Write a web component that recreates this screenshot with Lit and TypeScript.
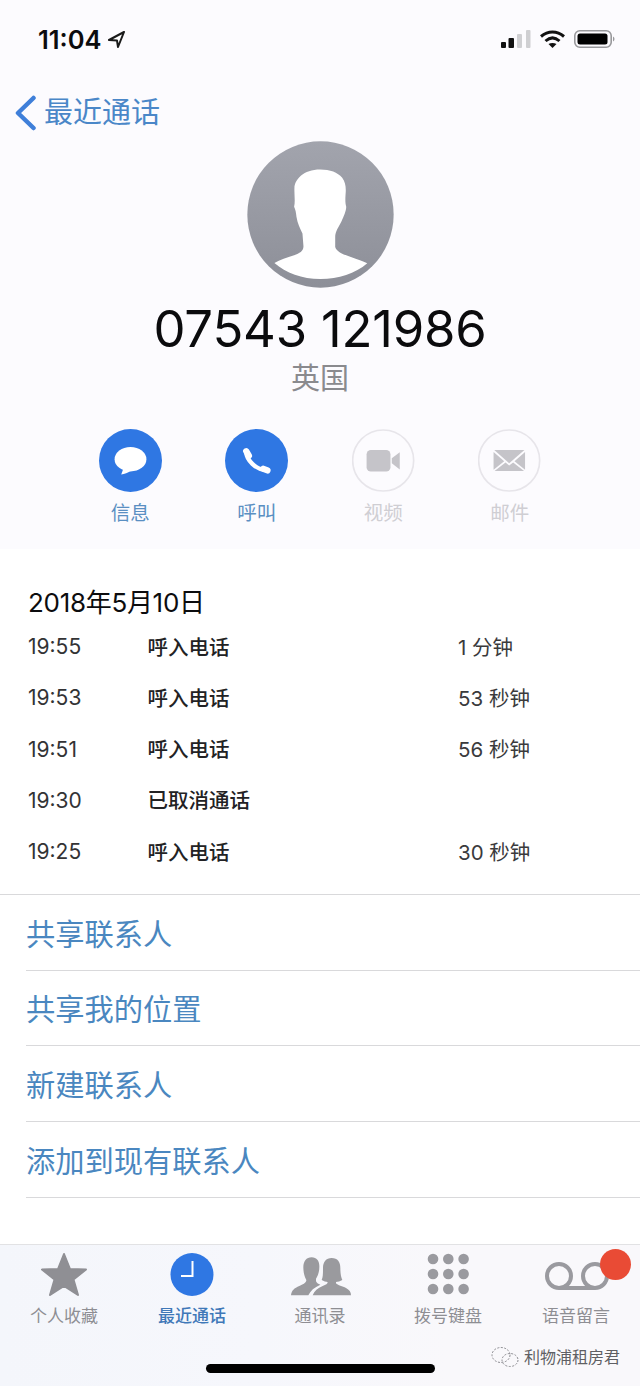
import { LitElement, html, css, svg } from "lit";
import { customElement } from "lit/decorators.js";

const CALLS = [
  ["19:55", "呼入电话", "1 分钟"],
  ["19:53", "呼入电话", "53 秒钟"],
  ["19:51", "呼入电话", "56 秒钟"],
  ["19:30", "已取消通话", ""],
  ["19:25", "呼入电话", "30 秒钟"],
];
const LINKS = ["共享联系人", "共享我的位置", "新建联系人", "添加到现有联系人"];

@customElement("app-root")
export class AppRoot extends LitElement {
  static styles = css`
    :host {
      display: block;
      position: relative;
      width: 640px;
      height: 1386px;
      overflow: hidden;
      background: #fff;
      font-family: Inter, "Noto Sans CJK SC", sans-serif;
      color: #0c0c0e;
    }
    svg { display: block; }
    .top { height: 549px; background: #fcfbfe; display: flex; flex-direction: column; align-items: center; }
    .status { align-self: stretch; height: 78px; display: flex; align-items: center; justify-content: space-between; padding: 0 25px 0 38px; }
    .time { display: flex; align-items: center; gap: 5px; font-size: 25.5px; font-weight: 600; }
    .sys { display: flex; align-items: center; gap: 8px; }
    .nav { align-self: stretch; height: 63px; padding: 6px 0 0 14px; box-sizing: border-box; display: flex; align-items: center; gap: 7px; color: #4a87c8; font-size: 29px; line-height: 1; }
    .avatar { width: 147px; height: 147px; }
    .number { font-size: 50.8px; line-height: 60px; margin-top: 11px; font-weight: 400; letter-spacing: -0.2px; color: #0b0b0d; }
    .country { font-size: 29px; line-height: 36px; color: #8a8a8e; margin-top: 2px; }
    .actions { display: grid; grid-template-columns: repeat(4, 126.5px); margin-top: 32px; }
    .action { display: flex; flex-direction: column; align-items: center; gap: 7px; font-size: 19.5px; line-height: 28px; color: #5a8fc2; }
    .action.off { color: #cfced3; }
    .log { padding: 36px 0 0 28px; height: 346px; box-sizing: border-box; border-bottom: 1.5px solid #d9d9db; }
    .date { font-size: 26px; line-height: 36px; letter-spacing: -0.3px; }
    .row { display: grid; grid-template-columns: 119.5px 310.5px 1fr; height: 51.25px; align-items: center; font-size: 20.5px; color: #1b1b1d; }
    .row .t { font-size: 21px; color: #333335; }
    .row .k { font-weight: 500; color: #222224; padding-bottom: 2px; }
    .row .d { color: #3a3a3c; padding-bottom: 2px; }
    .links { padding-left: 26px; }
    .link { height: 75.7px; box-sizing: border-box; display: flex; align-items: center; padding-bottom: 1.5px; border-bottom: 1.5px solid #d9d9db; color: #4a87c0; font-size: 29.25px; }
    .tabs { position: absolute; left: 0; right: 0; top: 1243.5px; bottom: 0; border-top: 1.5px solid #e2e2e4; background: linear-gradient(90deg, #f4f6fb, #f6f7fc 40%, #f9f8fb 70%, #f9f8fb); display: grid; grid-template-columns: repeat(5, 128px); align-content: start; }
    .tab { display: flex; flex-direction: column; align-items: center; font-size: 17px; line-height: 24px; color: #8e8e93; }
    .tab.on { color: #3f78b8; font-weight: 500; }
    .tab svg { margin: 7px 0 7px; }
    .badge { position: absolute; left: 599.5px; top: 1248.5px; width: 31px; height: 31px; border-radius: 50%; background: #e94b35; }
    .home { position: absolute; left: 206px; top: 1363.5px; width: 229px; height: 9px; border-radius: 5px; background: #000; }
    .mark { position: absolute; left: 490px; top: 1342px; display: flex; align-items: center; gap: 4px; font-size: 16px; line-height: 30px; color: #5f5f64; text-shadow: 0 0 2px #fff; white-space: nowrap; }
  `;

  private avatar() {
    return html`<svg class="avatar" viewBox="82 35 438 440">
      <defs>
        <linearGradient id="g" x1="0" y1="0" x2="0" y2="1">
          <stop offset="0" stop-color="#a2a4ad"></stop>
          <stop offset="1" stop-color="#8d8f98"></stop>
        </linearGradient>
      </defs>
      <circle cx="301" cy="255" r="219" fill="url(#g)"></circle>
      <path fill="#fff" d="M300 120C330 120 352 128 366 145C376 158 378 175 376 195C375 210 375 222 378 232C378 245 370 262 364 275C356 292 345 305 345 322L345 352C350 368 370 374 392 382C412 389 428 394 441 401C405 432 355 448 301 448C245 448 198 430 163 400C180 390 200 384 222 377C238 371 250 365 250 350L247 312C240 298 232 282 229 262C228 250 226 240 222 232C226 215 222 195 223 175C224 150 250 120 300 120Z"></path>
    </svg>`;
  }

  private msg() {
    return html`<svg width="63" height="63" viewBox="55 27 190 190">
      <circle cx="150" cy="122" r="95" fill="#2f77e3"></circle>
      <ellipse cx="150" cy="118" rx="48" ry="37" fill="#fff"></ellipse>
      <path fill="#fff" d="M128 148L122 164C132 163 142 159 150 154Z"></path>
    </svg>`;
  }
  private phone() {
    return html`<svg width="63" height="63" viewBox="433 27 190 190">
      <circle cx="528" cy="122" r="95" fill="#2f77e3"></circle>
      <g fill="none" stroke="#fff" stroke-linecap="round">
        <path stroke-width="13" d="M497 98C499 122 526 148 552 150"></path>
        <path stroke-width="19" d="M497 94L505 107"></path>
        <path stroke-width="19" d="M549 147L561 152"></path>
      </g>
    </svg>`;
  }
  private video() {
    return html`<svg width="63" height="63" viewBox="64 27 190 190">
      <circle cx="158" cy="122" r="92" fill="none" stroke="#e7e5ea" stroke-width="5"></circle>
      <rect x="108" y="90" width="72" height="65" rx="13" fill="#c5c4c9"></rect>
      <path fill="#c5c4c9" d="M184 115L208 97V149L184 130Z"></path>
    </svg>`;
  }
  private mail() {
    return html`<svg width="63" height="63" viewBox="443 27 190 190">
      <circle cx="537" cy="122" r="92" fill="none" stroke="#e7e5ea" stroke-width="5"></circle>
      <path fill="#c5c4c9" d="M492 90H583L537 130Z"></path>
      <path fill="#c5c4c9" d="M490 96L522 124L490 150Z"></path>
      <path fill="#c5c4c9" d="M585 96L553 124L585 150Z"></path>
      <path fill="#c5c4c9" d="M493 154L526 128L537 137L549 128L582 154Z"></path>
    </svg>`;
  }

  private star() {
    return html`<svg width="48" height="45" viewBox="0 0 48 45">
      <path fill="#8f8f94" stroke="#8f8f94" stroke-width="2" stroke-linejoin="round" d="M24 2L30 17L46 17.500L33.500 27.500L38 43L24 34L10 43L14.500 27.500L2 17.500L18 17Z"></path>
    </svg>`;
  }
  private clock() {
    return html`<svg width="44" height="45" viewBox="0 0 44 45">
      <circle cx="22" cy="22.500" r="21.500" fill="#2f77e3"></circle>
      <path fill="none" stroke="#fff" stroke-width="2" d="M22.500 9V24H11"></path>
    </svg>`;
  }
  private people() {
    return html`<svg width="66" height="45" viewBox="18 12 198 135">
      <path fill="#9a9a9e" d="M92 28C108 28 116 40 115 58C115 72 110 85 105 92L105 100C108 106 112 108 118 110C100 118 88 128 82 142L30 142C31 128 40 120 55 114C68 108 76 104 76 96C70 85 67 72 67 58C67 40 76 28 92 28Z"></path>
      <path fill="#9a9a9e" d="M152 30C170 30 178 42 178 60C178 75 180 88 184 96C178 100 170 102 165 102L165 106C170 112 185 115 195 120C205 125 210 132 210 142L95 142C100 128 110 120 125 114C135 110 140 108 140 102C135 102 128 100 122 96C126 88 126 75 126 60C126 42 135 30 152 30Z"></path>
    </svg>`;
  }
  private keypad() {
    const xs = [9, 24.3, 39.6];
    const ys = [7, 22, 37];
    return html`<svg width="48" height="45" viewBox="0 0 48 45">
      ${ys.map((y) => xs.map((x) => svg`<circle cx=${x} cy=${y} r="5.300" fill="#9a9a9f"></circle>`))}
    </svg>`;
  }
  private voicemail() {
    return html`<svg width="66" height="45" viewBox="0 0 66 45">
      <g fill="none" stroke="#9a9a9f" stroke-width="4">
        <circle cx="16" cy="24" r="12"></circle>
        <circle cx="52" cy="24" r="12"></circle>
        <path d="M16 36H52"></path>
      </g>
    </svg>`;
  }

  render() {
    return html`
      <section class="top">
        <div class="status">
          <div class="time">11:04
            <svg width="19" height="18" viewBox="0 0 19 18"><path fill="#fff" stroke="#1a1a1a" stroke-width="2" stroke-linejoin="round" d="M17 2L2 10L10 10.500L11 17Z"></path></svg>
          </div>
          <div class="sys">
            <svg width="30" height="18" viewBox="0 0 30 18">
              <rect x="0" y="12" width="5" height="6" rx="1" fill="#111"></rect>
              <rect x="7.500" y="8" width="5.500" height="10" rx="1" fill="#111"></rect>
              <rect x="16" y="4" width="5" height="14" rx="1" fill="#cfcfd2"></rect>
              <rect x="25" y="0" width="4.500" height="18" rx="1" fill="#cfcfd2"></rect>
            </svg>
            <svg width="27" height="18" viewBox="0 0 27 18">
              <path fill="none" stroke="#111" stroke-width="3" d="M2 6.500C9 0.500 18 0.500 25 6.500"></path>
              <path fill="none" stroke="#111" stroke-width="3" d="M6.500 11C11 7 16 7 20.500 11"></path>
              <path fill="#111" d="M13.500 18L9.500 14C12 12.500 15 12.500 17.500 14Z"></path>
            </svg>
            <svg width="41" height="18" viewBox="0 0 41 18">
              <rect x="0.800" y="0.800" width="36.400" height="16.400" rx="5" fill="none" stroke="#98989b" stroke-width="1.600"></rect>
              <rect x="3.500" y="3.500" width="30" height="11" rx="2.500" fill="#000"></rect>
              <path fill="#98989b" d="M39 6.500C41 7.500 41 10.500 39 11.500Z"></path>
            </svg>
          </div>
        </div>
        <div class="nav">
          <svg width="23" height="36" viewBox="0 0 23 36"><path fill="none" stroke="#3f7fd9" stroke-width="4.500" stroke-linecap="round" stroke-linejoin="round" d="M19.500 3L4 18L19.500 33"></path></svg>
          <span>最近通话</span>
        </div>
        ${this.avatar()}
        <div class="number">07543 121986</div>
        <div class="country">英国</div>
        <div class="actions">
          <div class="action">${this.msg()}<span>信息</span></div>
          <div class="action">${this.phone()}<span>呼叫</span></div>
          <div class="action off">${this.video()}<span>视频</span></div>
          <div class="action off">${this.mail()}<span>邮件</span></div>
        </div>
      </section>
      <section class="log">
        <div class="date">2018年5月10日</div>
        ${CALLS.map((c) => html`<div class="row"><span class="t">${c[0]}</span><span class="k">${c[1]}</span><span class="d">${c[2]}</span></div>`)}
      </section>
      <section class="links">
        ${LINKS.map((l) => html`<div class="link">${l}</div>`)}
      </section>
      <nav class="tabs">
        <div class="tab">${this.star()}<span>个人收藏</span></div>
        <div class="tab on">${this.clock()}<span>最近通话</span></div>
        <div class="tab">${this.people()}<span>通讯录</span></div>
        <div class="tab">${this.keypad()}<span>拨号键盘</span></div>
        <div class="tab">${this.voicemail()}<span>语音留言</span></div>
      </nav>
      <div class="badge"></div>
      <div class="home"></div>
      <div class="mark">
        <svg width="30" height="24" viewBox="0 0 30 24"><g fill="none" stroke="#8a8a8f" stroke-width="1" stroke-dasharray="2 1.500"><ellipse cx="11" cy="10" rx="9" ry="7.500"></ellipse><ellipse cx="20" cy="15" rx="8" ry="6.500"></ellipse></g></svg>
        <span>利物浦租房君</span>
      </div>
    `;
  }
}
